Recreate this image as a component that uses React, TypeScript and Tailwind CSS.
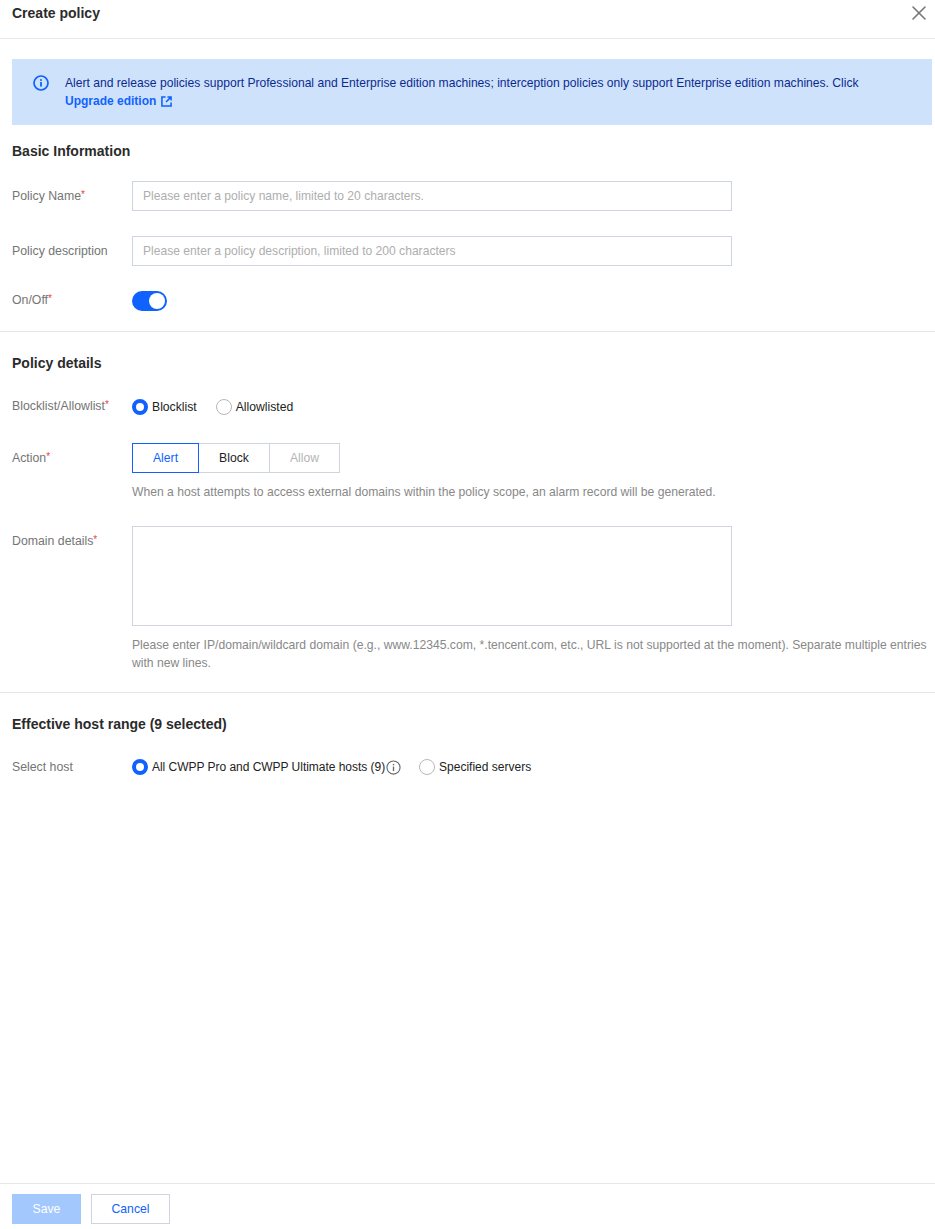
import { X } from 'lucide-react'
import type { ReactNode } from 'react'

function Label({ text, required }: { text: string; required?: boolean }) {
  return (
    <div className="w-[120px] shrink-0 text-[12.3px] text-[#757575] leading-[18px]">
      {text}
      {required && <span className="text-[#e54545] align-[2px] text-[10px]">*</span>}
    </div>
  )
}

function Radio({ checked, children }: { checked?: boolean; children: ReactNode }) {
  return (
    <span className="flex items-center gap-[4px] text-[#222]">
      {checked ? (
        <span className="w-4 h-4 rounded-full border-[4px] border-[#0f62fe] bg-white" />
      ) : (
        <span className="w-4 h-4 rounded-full border border-[#b8b8b8] bg-white" />
      )}
      <span>{children}</span>
    </span>
  )
}

function TextInput({ placeholder }: { placeholder: string }) {
  return (
    <div className="w-[600px] h-[30px] border border-[#cfd5de] px-[10px] flex items-center text-[12.1px] text-[#aeaeae]">
      {placeholder}
    </div>
  )
}

export default function App() {
  return (
    <div className="h-[1229px] w-[935px] flex flex-col bg-white text-[12.2px] font-['Liberation_Sans',Arial,sans-serif] overflow-hidden">
      {/* Header */}
      <div className="h-[39px] shrink-0 border-b border-[#e8e8ee] flex justify-between pl-3 pr-[4px] pt-[5px]">
        <div className="text-[14px] font-bold text-[#2b2b2b] leading-4">Create policy</div>
        <X className="w-6 h-6 text-[#777] -mt-[4px]" strokeWidth={1.6} />
      </div>

      {/* Notice */}
      <div className="mt-5 ml-3 w-[920px] h-[66px] shrink-0 bg-[#cfe2fc] flex pl-[21px] pt-[15px]">
        <svg viewBox="0 0 16 16" className="w-4 h-4 mt-[1px] shrink-0 text-[#0f62fe]" fill="none">
          <circle cx="8" cy="8" r="7" stroke="currentColor" strokeWidth="1.7" />
          <rect x="7.1" y="7" width="1.8" height="4.6" fill="currentColor" />
          <rect x="7.1" y="4.2" width="1.8" height="1.7" fill="currentColor" />
        </svg>
        <div className="ml-[16px] leading-[18px] text-[12.12px] text-[#0b2a8f]">
          <div>
            Alert and release policies support Professional and Enterprise edition machines; interception policies only support Enterprise edition machines. Click
          </div>
          <div className="flex items-center gap-[5px] text-[12px] font-bold text-[#0f62fe]">
            Upgrade edition
            <svg viewBox="0 0 12 12" className="w-[11px] h-[11px]" fill="none" stroke="currentColor" strokeWidth="1.7">
              <path d="M5 1H1v10h10V7" />
              <path d="M7 1h4v4M11 1 5.5 6.5" />
            </svg>
          </div>
        </div>
      </div>

      {/* Basic Information */}
      <div className="px-3">
        <div className="mt-[18px] text-[14px] font-bold text-[#2b2b2b] leading-4">Basic Information</div>
        <div className="mt-[22px] flex items-center">
          <div className="-mt-[1px]">
            <Label text="Policy Name" required />
          </div>
          <TextInput placeholder="Please enter a policy name, limited to 20 characters." />
        </div>
        <div className="mt-[25px] flex items-center">
          <Label text="Policy description" />
          <TextInput placeholder="Please enter a policy description, limited to 200 characters" />
        </div>
        <div className="mt-[25px] flex items-start">
          <div className="-mt-[1px]">
            <Label text="On/Off" required />
          </div>
          <div className="w-[35px] h-5 rounded-full bg-[#0f62fe] flex items-center justify-end pr-[2px]">
            <span className="w-4 h-4 rounded-full bg-white" />
          </div>
        </div>
      </div>
      <div className="mt-5 h-px shrink-0 bg-[#e6e6e6]" />

      {/* Policy details */}
      <div className="px-3">
        <div className="mt-[23px] text-[14px] font-bold text-[#2b2b2b] leading-4">Policy details</div>
        <div className="mt-[25px] flex items-center">
          <div className="-mt-[2px]">
            <Label text="Blocklist/Allowlist" required />
          </div>
          <div className="flex gap-[19px] mt-[2px]">
            <Radio checked>Blocklist</Radio>
            <Radio>Allowlisted</Radio>
          </div>
        </div>
        <div className="mt-[27px] flex">
          <div className="pt-[5px]">
            <Label text="Action" required />
          </div>
          <div>
            <div className="flex h-[30px]">
              <div className="w-[67px] border border-[#0f62fe] text-[#0f62fe] flex items-center justify-center">Alert</div>
              <div className="w-[70px] border-y border-[#cfd5de] text-[#222] flex items-center justify-center">Block</div>
              <div className="w-[71px] border border-[#cfd5de] text-[#b5b5b5] flex items-center justify-center">Allow</div>
            </div>
            <div className="mt-[10px] leading-[18px] text-[12.15px] text-[#888]">
              When a host attempts to access external domains within the policy scope, an alarm record will be generated.
            </div>
          </div>
        </div>
        <div className="mt-[25px] flex">
          <div className="pt-[5px]">
            <Label text="Domain details" required />
          </div>
          <div>
            <div className="w-[600px] h-[100px] border border-[#cfd5de]" />
            <div className="mt-[10px] leading-[18px] text-[12.15px] text-[#888] w-[800px]">
              Please enter IP/domain/wildcard domain (e.g., www.12345.com, *.tencent.com, etc., URL is not supported at the moment). Separate multiple entries with new lines.
            </div>
          </div>
        </div>
      </div>
      <div className="mt-5 h-px shrink-0 bg-[#e6e6e6]" />

      {/* Effective host range */}
      <div className="px-3">
        <div className="mt-[23px] text-[14px] font-bold text-[#2b2b2b] leading-4">Effective host range (9 selected)</div>
        <div className="mt-[26px] flex items-center">
          <Label text="Select host" />
          <div className="flex gap-[18px] text-[12px]">
            <span className="flex items-center">
              <span className="tracking-[-0.03px]">
                <Radio checked>All CWPP Pro and CWPP Ultimate hosts (9)</Radio>
              </span>
              <svg viewBox="0 0 16 16" className="w-[15px] h-[15px] ml-[1px] text-[#666]" fill="none">
                <circle cx="8" cy="8" r="7" stroke="currentColor" strokeWidth="1.2" />
                <rect x="7.3" y="7" width="1.4" height="4.8" fill="currentColor" />
                <rect x="7.3" y="4.2" width="1.4" height="1.5" fill="currentColor" />
              </svg>
            </span>
            <Radio>Specified servers</Radio>
          </div>
        </div>
      </div>

      {/* Footer */}
      <div className="mt-auto h-[46px] shrink-0 border-t border-[#e6e6e6] flex gap-[10px] px-3 pt-[10px]">
        <div className="w-[69px] h-[30px] bg-[#a3c8fd] text-white flex items-center justify-center">Save</div>
        <div className="w-[79px] h-[30px] border border-[#cfd5de] text-[#0f62fe] flex items-center justify-center">Cancel</div>
      </div>
    </div>
  )
}
